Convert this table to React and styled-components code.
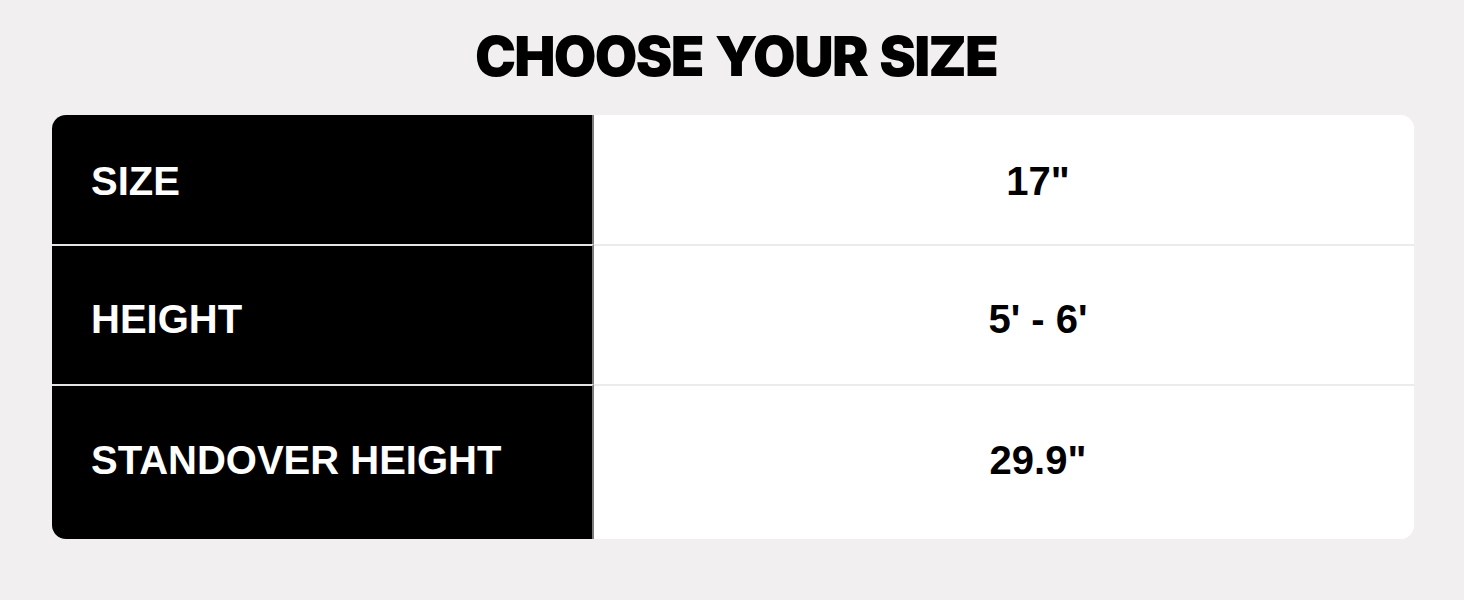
import React from "react";
import styled, { createGlobalStyle } from "styled-components";

const Global = createGlobalStyle`
  html, body { margin: 0; padding: 0; }
  body {
    background: #f1efef;
    font-family: "Liberation Sans", Arial, sans-serif;
  }
`;

const Page = styled.div`
  width: 1464px;
  height: 600px;
  box-sizing: border-box;
  padding: 27px 50px 0 52px;
  background: #f1efef;
`;

const Title = styled.h1`
  margin: 0 0 30px;
  height: 58px;
  font-family: Inter, "Noto Sans", sans-serif;
  font-weight: 900;
  font-size: 55px;
  line-height: 58px;
  text-align: center;
  color: #000;
  letter-spacing: -1.7px;
  word-spacing: 3px;
  padding-left: 6px;
`;

const Table = styled.div`
  display: flex;
  flex-direction: column;
  border-radius: 14px;
  overflow: hidden;
  background: #fff;
`;

const Row = styled.div`
  display: grid;
  grid-template-columns: 542px 1fr;
  height: ${(p) => p.$h}px;
`;

const Label = styled.div`
  box-sizing: border-box;
  background: #000;
  color: #fff;
  border-right: 2px solid #7c7c7c;
  border-top: ${(p) => (p.$first ? "none" : "2px solid #e4e4e4")};
  padding: ${(p) => p.$pad}px 0 0 39px;
  font-weight: 700;
  font-size: 40px;
  line-height: 40px;
`;

const Value = styled.div`
  box-sizing: border-box;
  background: #fff;
  color: #000;
  border-top: ${(p) => (p.$first ? "none" : "2px solid #ebebeb")};
  padding: ${(p) => p.$pad}px 0 0 68px;
  text-align: center;
  font-weight: 700;
  font-size: 40px;
  line-height: 40px;
`;

const rows = [
  { label: "SIZE", value: '17"', h: 129, pad: 46 },
  { label: "HEIGHT", value: "5' - 6'", h: 140, pad: 55 },
  { label: "STANDOVER HEIGHT", value: '29.9"', h: 155, pad: 56 },
];

export default function App() {
  return (
    <>
      <Global />
      <Page>
        <Title>CHOOSE YOUR SIZE</Title>
        <Table>
          {rows.map((r, i) => (
            <Row key={r.label} $h={r.h}>
              <Label $first={i === 0} $pad={i === 0 ? r.pad : r.pad - 2}>
                {r.label}
              </Label>
              <Value $first={i === 0} $pad={i === 0 ? r.pad : r.pad - 2}>
                {r.value}
              </Value>
            </Row>
          ))}
        </Table>
      </Page>
    </>
  );
}
